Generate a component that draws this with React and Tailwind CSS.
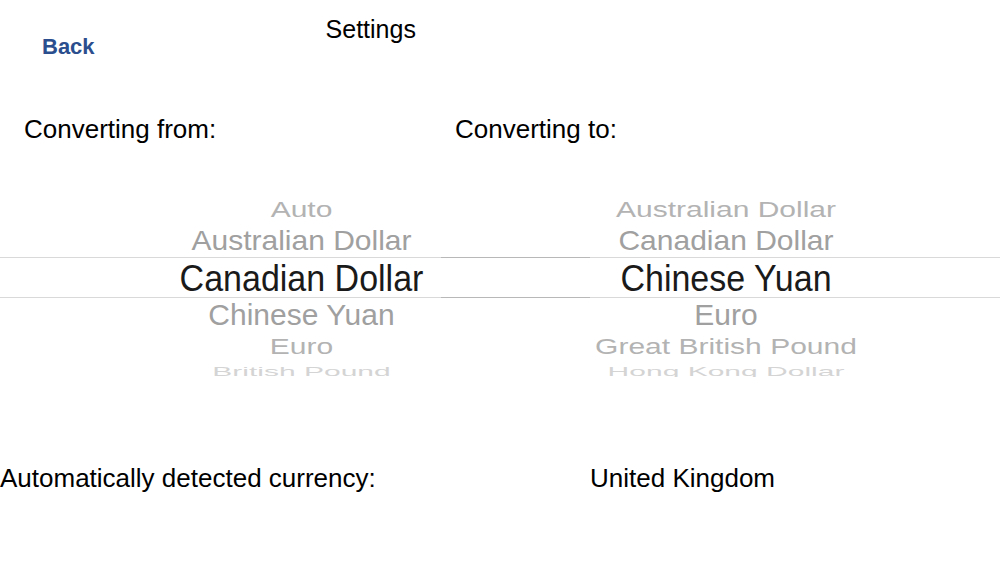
import React from "react";

const fromList = [
  { label: "Auto", row: "h-[30px] pt-[3px]", text: "text-[30px] scale-y-[0.73] text-[#b3b3b3]" },
  { label: "Australian Dollar", row: "h-[34px]", text: "text-[30px] scale-y-[0.95] text-[#a0a0a0]" },
  { label: "Canadian Dollar", row: "h-[41px] border-y border-black/15", text: "text-[34px] scale-y-[1.07] text-[#1a1a1a]" },
  { label: "Chinese Yuan", row: "h-[33px]", text: "text-[30px] scale-y-[0.97] text-[#a0a0a0]" },
  { label: "Euro", row: "h-[28px] pt-[3px]", text: "text-[30px] scale-y-[0.73] text-[#b3b3b3]" },
  { label: "British Pound", row: "h-[18px] pt-[6px] overflow-hidden", text: "text-[30px] scale-y-[0.45] text-[#d4d4d4]" },
];

const toList = [
  { label: "Australian Dollar", row: "h-[30px] pt-[3px]", text: "text-[30px] scale-y-[0.73] text-[#b3b3b3]" },
  { label: "Canadian Dollar", row: "h-[34px]", text: "text-[30px] scale-y-[0.95] text-[#a0a0a0]" },
  { label: "Chinese Yuan", row: "h-[41px] border-y border-black/15", text: "text-[34px] scale-y-[1.07] text-[#1a1a1a]" },
  { label: "Euro", row: "h-[33px]", text: "text-[30px] scale-y-[0.97] text-[#a0a0a0]" },
  { label: "Great British Pound", row: "h-[28px] pt-[3px]", text: "text-[30px] scale-y-[0.73] text-[#b3b3b3]" },
  { label: "Hong Kong Dollar", row: "h-[18px] pt-[6px] overflow-hidden", text: "text-[30px] scale-y-[0.45] text-[#d4d4d4]" },
];

// One wheel of the picker, the middle row is the selection band
const Wheel = ({ items, className, pad }) => (
  <div className={`flex flex-col ${className}`}>
    {items.map((item) => (
      <div key={item.label} className={`flex items-center justify-center ${pad} ${item.row}`}>
        <span className={`inline-block leading-none whitespace-nowrap ${item.text}`}>
          {item.label}
        </span>
      </div>
    ))}
  </div>
);

const App = () => {
  return (
    <div className="w-[1000px] h-[563px] bg-white overflow-hidden flex flex-col font-['Liberation_Sans',Arial,sans-serif] text-black">
      {/* Top bar */}
      <div className="flex items-start">
        <button className="ml-[42px] mt-[36px] text-[22px] leading-none font-bold text-[#2b4f8e]">
          Back
        </button>
        <h1 className="ml-[231px] mt-[17px] text-[25px] leading-none font-normal">Settings</h1>
      </div>

      {/* Labels */}
      <div className="flex mt-[58px] pl-[24px] text-[26px] leading-[26px]">
        <span className="w-[431px]">Converting from:</span>
        <span>Converting to:</span>
      </div>

      {/* Pickers */}
      <div className="flex mt-[51px]">
        <Wheel items={fromList} className="w-[590px]" pad="pl-[13px]" />
        <Wheel items={toList} className="w-[559px] -ml-[149px]" pad="pl-[11px]" />
      </div>

      {/* Detected currency */}
      <div className="flex mt-[88px] text-[26px] leading-[26px]">
        <span className="w-[590px]">Automatically detected currency:</span>
        <span>United Kingdom</span>
      </div>
    </div>
  );
};

export default App;
